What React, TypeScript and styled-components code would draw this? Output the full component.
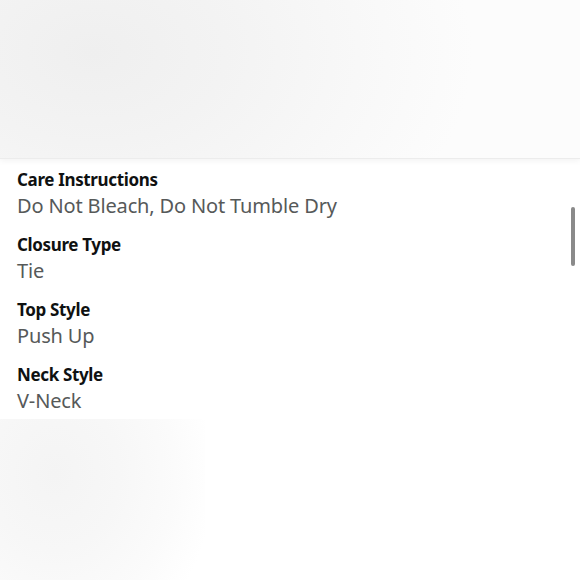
import React from "react";
import styled, { createGlobalStyle } from "styled-components";

const Global = createGlobalStyle`
  html, body { margin: 0; padding: 0; background: #ffffff; }
  body { font-family: "Noto Sans", "Open Sans", Arial, sans-serif; }
  #root { height: 580px; }
`;

const Page = styled.div`
  position: relative;
  width: 580px;
  height: 580px;
  display: flex;
  flex-direction: column;
  overflow: hidden;
  background: #ffffff;
`;

const Banner = styled.div`
  height: 158px;
  flex: none;
  background:
    radial-gradient(ellipse 380px 260px at 16% 33%, #efefef 0%, #f3f3f3 35%, #f8f8f8 70%, #fcfcfc 100%);
  background-color: #fcfcfc;
  box-shadow: 0 1px 0 #ececec, 0 3px 6px rgba(0, 0, 0, 0.05);
  position: relative;
  z-index: 1;
`;

const List = styled.div`
  display: flex;
  flex-direction: column;
  gap: 13px;
  padding: 10px 17px 4px;
`;

const Item = styled.div`
  display: flex;
  flex-direction: column;
`;

const Label = styled.div`
  font-size: 17px;
  line-height: 24px;
  font-weight: 700;
  letter-spacing: -0.35px;
  color: #0f1111;
`;

const Value = styled.div`
  font-size: 20px;
  line-height: 28px;
  letter-spacing: -0.15px;
  color: #565959;
`;

const Footer = styled.div`
  flex: 1;
  display: flex;
`;

const Shade = styled.div`
  width: 205px;
  height: 100%;
  background: radial-gradient(ellipse 160px 190px at 55px 55px, #f4f4f4 0%, #f7f7f7 40%, #fbfbfb 75%, #ffffff 100%);
`;

const Scrollbar = styled.div`
  position: absolute;
  right: 5px;
  top: 207px;
  width: 4px;
  height: 59px;
  border-radius: 2px;
  background: #8a8a8a;
`;

const specs = [
  { label: "Care Instructions", value: "Do Not Bleach, Do Not Tumble Dry" },
  { label: "Closure Type", value: "Tie" },
  { label: "Top Style", value: "Push Up" },
  { label: "Neck Style", value: "V-Neck" },
];

export default function App() {
  return (
    <Page>
      <Global />
      <Banner />
      <List>
        {specs.map((s) => (
          <Item key={s.label}>
            <Label>{s.label}</Label>
            <Value>{s.value}</Value>
          </Item>
        ))}
      </List>
      <Footer>
        <Shade />
      </Footer>
      <Scrollbar />
    </Page>
  );
}
